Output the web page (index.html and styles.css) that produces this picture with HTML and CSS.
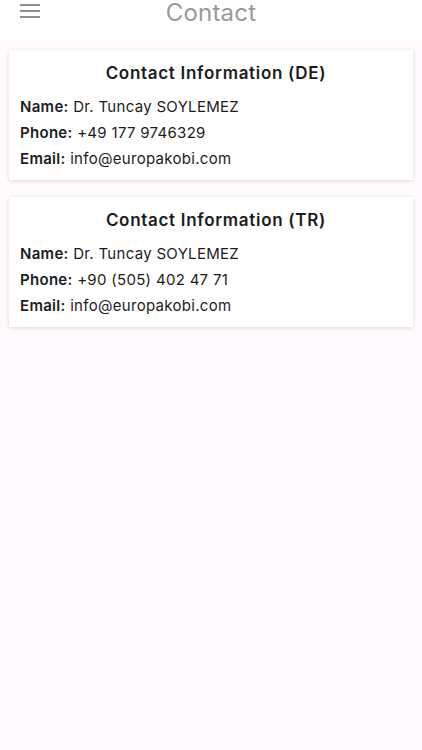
FILE: index.html
```html
<html>
	<head>
		<title>Contact</title>
		<link rel="stylesheet" href="styles.css">
	</head>
	<body>
		<div class="header">
			<div class="menu_icon">
				<span></span><span></span><span></span>
			</div>
			<span class="header_title">Contact</span>
		</div>
		<div class="content">
			<div class="card">
				<div class="card_title">Contact Information (DE)</div>
				<p><b>Name:</b> Dr. Tuncay SOYLEMEZ</p>
				<p><b>Phone:</b> +49 177 9746329</p>
				<p><b>Email:</b> info@europakobi.com</p>
			</div>
			<div class="card">
				<div class="card_title">Contact Information (TR)</div>
				<p><b>Name:</b> Dr. Tuncay SOYLEMEZ</p>
				<p><b>Phone:</b> +90 (505) 402 47 71</p>
				<p><b>Email:</b> info@europakobi.com</p>
			</div>
		</div>
	</body>
</html>
```

FILE: styles.css
```css
body {
	margin: 0;
	background-color: #FEFAFE;
	font-family: "Inter", "Noto Sans", sans-serif;
	color: #1c1c1e;
}

.header {
	height: 40px;
	background-color: #FFFFFF;
	position: relative;
	display: flex;
	justify-content: center;
}

.menu_icon {
	position: absolute;
	left: 20px;
	top: 4px;
	width: 20px;
	display: flex;
	flex-direction: column;
	gap: 4px;
}

.menu_icon span {
	display: block;
	height: 2px;
	background-color: #8E8E8E;
}

.header_title {
	font-size: 24px;
	color: #9A9A9A;
	line-height: 24px;
	margin-top: 1px;
	letter-spacing: 0.2px;
}

.content {
	padding: 10px 9px;
	display: flex;
	flex-direction: column;
	gap: 17px;
}

.card {
	background-color: #FFFFFF;
	padding: 12px 11px 8px 11px;
	box-shadow: 0px 1px 4px 0px rgba(0,0,0,0.15);
}

.card_title {
	text-align: center;
	padding-left: 10px;
	font-size: 17px;
	font-weight: 600;
	letter-spacing: 0.7px;
	line-height: 22px;
	margin-bottom: 10px;
}

.card p {
	margin: 0;
	font-size: 15px;
	line-height: 26px;
	letter-spacing: 0.3px;
}

.card b {
	font-weight: 600;
}
```
